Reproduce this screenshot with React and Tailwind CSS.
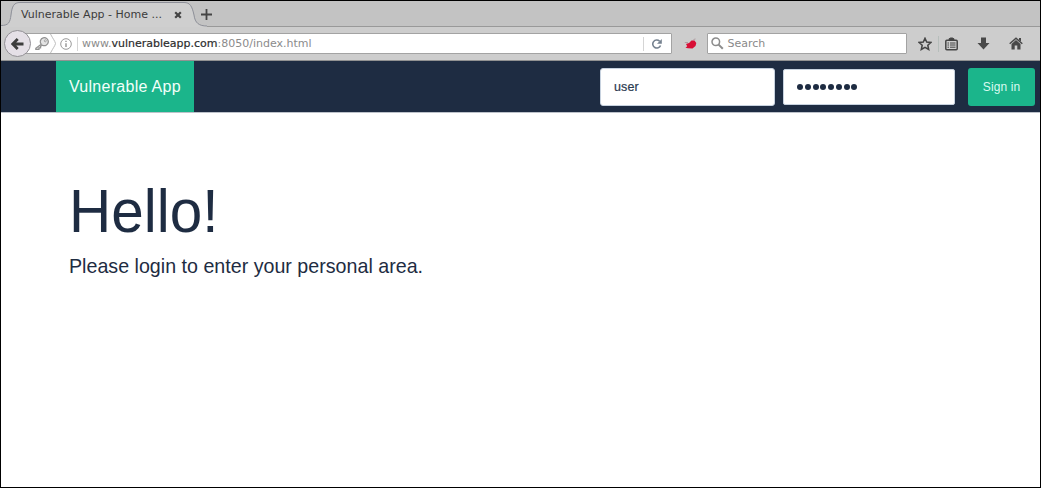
import React from "react";

function TabStrip() {
  return (
    <div className="relative flex h-[26px] shrink-0 items-center bg-[#c3c3c3] shadow-[inset_0_-1px_0_#999999]">
      <svg className="absolute left-0 top-0" width="210" height="26" viewBox="0 0 210 26" fill="none">
        <path d="M0 26V24.5C8 24.5 9 21 10 14C11 5 13 1.5 19 1.5H183C189 1.5 191 5 193 14C194 22 198 25 206 25V26Z" fill="#cfcfcf" />
        <path d="M0 24.5C8 24.5 9 21 10 14C11 5 13 1.5 19 1.5H183C189 1.5 191 5 193 14C194 22 198 25 206 25" stroke="#8d8f98" />
      </svg>
      <div className="relative flex h-full w-full items-center pl-5">
        <span className="w-[153px] whitespace-nowrap pt-[2px] text-[11px] leading-[26px] text-[#3c3c3c]">
          <span>Vulnerable App - Home ...</span>
        </span>
        <svg className="mt-px" width="8" height="8" viewBox="0 0 8 8" fill="none">
          <path d="M1.2 1.2L6.8 6.8M6.8 1.2L1.2 6.8" stroke="#444444" strokeWidth="2.2" />
        </svg>
        <svg className="ml-[19px] mt-px" width="11" height="11" viewBox="0 0 11 11" fill="none">
          <path d="M5.5 0V11M0 5.5H11" stroke="#444444" strokeWidth="1.8" />
        </svg>
      </div>
    </div>
  );
}

function Toolbar() {
  return (
    <div className="flex h-[34px] shrink-0 items-center border-b border-[#929292] bg-[#cdcdcd] pl-[3px] text-[11px]">
      <div className="z-10 flex size-[27px] shrink-0 items-center justify-center rounded-full border border-[#929095] bg-[#e5e0e7]">
        <svg width="13" height="12" viewBox="0 0 13 12" fill="none">
          <path d="M6.7 1L1.8 6L6.7 11M2 6H12.5" stroke="#3d3d3d" strokeWidth="2.8" />
        </svg>
      </div>
      <div className="-ml-2 flex h-[21px] w-[649px] shrink-0 items-center rounded-[1px] border border-[#a3a3a3] bg-white pl-[11px]">
        <svg width="14" height="13" viewBox="0 0 14 13" fill="none">
          <path d="M6.2 7.2L0.8 11.2V12.3H4V10.8H5.6V9.3L7.4 8.2A4 4 0 1 0 6.2 7.2Z" fill="#e4e4e4" stroke="#909090" strokeWidth="1.2" />
          <circle cx="10.3" cy="3.8" r="1" fill="#ffffff" stroke="#909090" strokeWidth="0.8" />
        </svg>
        <svg className="ml-px" width="7" height="19" viewBox="0 0 7 19" fill="none">
          <path d="M0.5 0C3 5 5 7 5.5 9.5C5 12 3 14 0.5 19" stroke="#bcbcbc" />
        </svg>
        <svg className="ml-[3px]" width="12" height="12" viewBox="0 0 12 12" fill="none">
          <circle cx="6" cy="6" r="5.3" stroke="#9a9a9a" />
          <path d="M6 5.2V9M6 2.8V4" stroke="#8b8b8b" strokeWidth="1.3" />
        </svg>
        <span className="ml-[5px] h-[14px] w-px bg-[#d5d5d5]" />
        <span className="ml-1 whitespace-nowrap pt-[2px] text-[#8b8b8b]">
          www.<span className="text-[#2d2d2d] [-webkit-text-stroke:0.2px_#2d2d2d]">vulnerableapp.com</span>:8050/index.html
        </span>
        <span className="ml-auto h-[14px] w-px bg-[#d5d5d5]" />
        <svg className="ml-2 mr-[9px]" width="10" height="10" viewBox="0 0 10 10" fill="none">
          <path d="M8.5 6.5A4 4 0 1 1 7.6 2.2" stroke="#75818f" strokeWidth="1.6" />
          <path d="M9.8 0V4.8H5Z" fill="#75818f" />
        </svg>
      </div>
      <svg className="ml-3 shrink-0" width="13" height="12" viewBox="0 0 13 12">
        <path d="M2 6L5 5L7.5 2.5L10.5 2.5L12.3 5L11.5 8L8.5 10.5L4 10.3L1.5 9.8L3.2 8.2Z" fill="#d80f36" />
        <path d="M0.8 4.5L4 4.5M9.5 1.5L11.5 1" stroke="#b09ca0" />
      </svg>
      <div className="ml-[10px] flex h-[21px] w-[200px] shrink-0 items-center rounded-[1px] border border-[#a3a3a3] bg-white pl-[3px] text-[#898989]">
        <svg width="13" height="13" viewBox="0 0 13 13" fill="none">
          <circle cx="4.8" cy="4.8" r="3.8" stroke="#8c8c8c" strokeWidth="1.5" />
          <path d="M7.6 7.6L11.8 11.8" stroke="#8c8c8c" strokeWidth="2" />
        </svg>
        <span className="ml-[3.5px] pt-[2px]">Search</span>
      </div>
      <svg className="ml-[11px] shrink-0" width="14" height="14" viewBox="0 0 14 14" fill="none">
        <path d="M7 1.3L8.7 5.1L12.9 5.5L9.8 8.2L10.7 12.5L7 10.3L3.3 12.5L4.2 8.2L1.1 5.5L5.3 5.1Z" stroke="#454545" strokeWidth="1.5" />
      </svg>
      <span className="ml-[6px] h-4 w-px bg-[#b6bebb]" />
      <svg className="ml-[6px] shrink-0" width="13" height="14" viewBox="0 0 13 14" fill="none">
        <rect x="0.8" y="3.2" width="11.4" height="9.5" rx="1" stroke="#454545" strokeWidth="1.5" />
        <path d="M4.1 3V1.7L5.5 1H7.5L8.9 1.7V3Z" fill="#454545" stroke="#454545" />
        <path d="M2.5 6H4M5 6H10.5M2.5 8H4M5 8H10.5M2.5 10.2H4M5 10.2H10.5" stroke="#454545" />
      </svg>
      <svg className="ml-[19px] shrink-0" width="13" height="13" viewBox="0 0 13 13">
        <path d="M4 0.5H9V6H12.5L6.5 12.5L0.5 6H4Z" fill="#484848" />
      </svg>
      <svg className="ml-[19px] shrink-0" width="14" height="13" viewBox="0 0 14 13" fill="none">
        <path d="M0.7 6.8L7 1.2L13.3 6.8" stroke="#484848" strokeWidth="1.5" />
        <path d="M2.5 7L7 3L11.5 7V12.5H8.3V8.5H5.7V12.5H2.5ZM10 1H12V4.5L10 3Z" fill="#484848" />
      </svg>
    </div>
  );
}

function Navbar() {
  return (
    <nav className="flex h-[52px] shrink-0 items-center border-b border-[#bdc2ca] bg-[#1e2c42] pl-[55px] pr-[5px] font-['Liberation_Sans',Arial,sans-serif]">
      <a className="flex h-full w-[138px] items-center bg-[#1bb58b] pl-[13px] text-[16px] text-[#f2fffa]">
        <span className="whitespace-nowrap tracking-[0.28px]">Vulnerable App</span>
      </a>
      <form className="ml-auto flex items-center pt-px">
        <div className="flex h-[38px] w-[175px] items-center rounded-[3px] border border-[#c7d2df] bg-white pl-[13px] text-[12.5px] text-[#2b3a50]">
          <span className="tracking-[0.1px] [-webkit-text-stroke:0.2px_#2b3a50]">user</span>
        </div>
        <div className="ml-2 flex h-[36px] w-[172px] items-center gap-[1.75px] rounded-[2px] border border-[#c7d2df] bg-white pl-[13px]">
          {Array.from({ length: 8 }, (_, i) => (
            <span key={i} className="size-[6px] rounded-full bg-[#1e2c42]" />
          ))}
        </div>
        <button type="button" className="ml-[13px] h-[38px] w-[67px] rounded-[3px] bg-[#1bb58b] text-[12px] text-[#d9faf0]">
          <span className="tracking-[0.1px]">Sign in</span>
        </button>
      </form>
    </nav>
  );
}

export default function App() {
  return (
    <div className="flex h-[488px] w-[1041px] flex-col overflow-hidden border border-black bg-white font-['DejaVu_Sans',sans-serif]">
      <TabStrip />
      <Toolbar />
      <Navbar />
      <main className="pl-[67.5px] pt-[65px] font-['Liberation_Sans',Arial,sans-serif] text-[#1e2c42]">
        <h1 className="text-[61.5px] leading-[66px]">
          <span className="inline-block origin-left scale-x-[0.95]">Hello!</span>
        </h1>
        <p className="mt-[10px] text-[21px] leading-6">
          <span className="inline-block origin-left scale-x-[0.936] whitespace-nowrap">
            Please login to enter your personal area.
          </span>
        </p>
      </main>
    </div>
  );
}
